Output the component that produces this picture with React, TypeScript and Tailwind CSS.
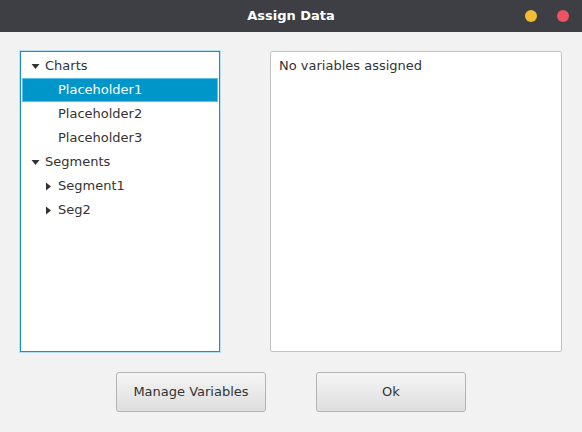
import React from "react";

const font = { fontFamily: '"DejaVu Sans", "Liberation Sans", sans-serif' };

function Arrow({ open }: { open: boolean }) {
  return open ? (
    <svg width="9" height="9" viewBox="0 0 9 9" className="shrink-0">
      <path d="M0.5 2 L8.5 2 L4.5 7 Z" fill="#333" />
    </svg>
  ) : (
    <svg width="9" height="9" viewBox="0 0 9 9" className="shrink-0">
      <path d="M2 0.5 L7 4.5 L2 8.5 Z" fill="#333" />
    </svg>
  );
}

function Row({
  label,
  depth,
  arrow,
  selected,
}: {
  label: string;
  depth: number;
  arrow?: "open" | "closed";
  selected?: boolean;
}) {
  return (
    <div
      className={
        "h-6 flex items-center text-[13px] " +
        (selected ? "bg-[#0096c9] border border-[#5cc0e6] text-white" : "border border-transparent text-[#333]")
      }
    >
      <div className={depth === 0 ? "w-[22px] flex justify-end pr-[5px]" : "w-[35px] flex justify-end pr-[5px]"}>
        {arrow && <Arrow open={arrow === "open"} />}
      </div>
      <span>{label}</span>
    </div>
  );
}

export default function App() {
  return (
    <div className="w-[582px] h-[432px] bg-[#f2f2f2] flex flex-col" style={font}>
      <div className="h-8 bg-[#3d3f45] flex items-center relative shrink-0">
        <div className="flex-1 text-center text-white font-bold text-[13px]">Assign Data</div>
        <div className="absolute right-[13px] top-[10px] flex gap-[20px]">
          <div className="w-3 h-3 rounded-full bg-[#f2bb33]" />
          <div className="w-3 h-3 rounded-full bg-[#ee5364]" />
        </div>
      </div>
      <div className="flex px-5 pt-[19px] gap-[50px]">
        <div className="w-[200px] h-[301px] bg-white border border-[#1b8fc9] shadow-[0_0_0_1px_#b6dff2] pt-[2px] px-[1px]">
          <Row label="Charts" depth={0} arrow="open" />
          <Row label="Placeholder1" depth={1} selected />
          <Row label="Placeholder2" depth={1} />
          <Row label="Placeholder3" depth={1} />
          <Row label="Segments" depth={0} arrow="open" />
          <Row label="Segment1" depth={1} arrow="closed" />
          <Row label="Seg2" depth={1} arrow="closed" />
        </div>
        <div className="w-[292px] h-[301px] bg-white border border-[#c4c4c4] rounded-[2px] px-2 pt-[4px] text-[13px] text-[#333]">
          No variables assigned
        </div>
      </div>
      <div className="flex justify-center gap-[50px] pt-5">
        <button className="w-[150px] h-[40px] rounded-[3px] border border-[#b4b4b4] bg-gradient-to-b from-[#f5f5f5] to-[#dedede] text-[13px] text-[#333]">
          Manage Variables
        </button>
        <button className="w-[150px] h-[40px] rounded-[3px] border border-[#b4b4b4] bg-gradient-to-b from-[#f5f5f5] to-[#dedede] text-[13px] text-[#333]">
          Ok
        </button>
      </div>
    </div>
  );
}
